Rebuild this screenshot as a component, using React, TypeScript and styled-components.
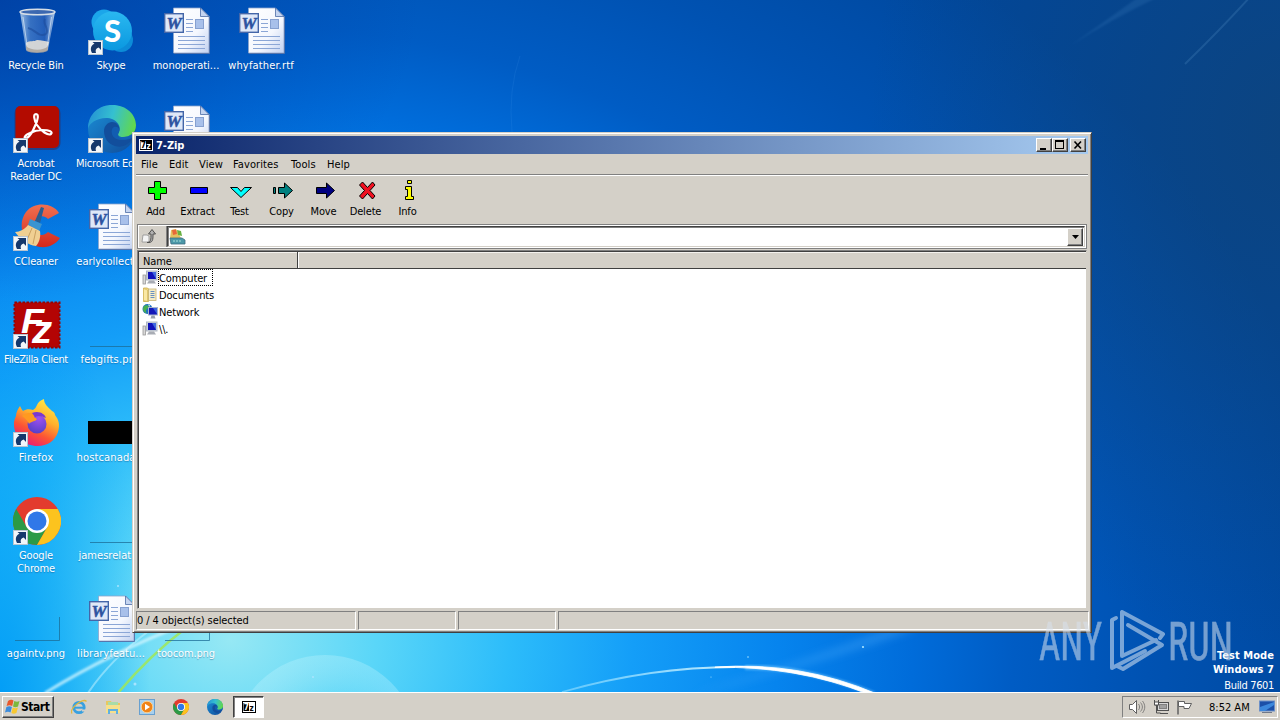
import { ReactNode } from 'react';
import styled, { createGlobalStyle, css } from 'styled-components';

const COLORS = {
  face: '#d4d0c8',
  shadow: '#808080',
  dark: '#404040',
  light: '#ffffff',
};

const GlobalStyle = createGlobalStyle`
  * {
    box-sizing: border-box;
  }

  body {
    margin: 0;
    overflow: hidden;
    color: #000;
    font-family: 'DejaVu Sans Condensed', 'DejaVu Sans', sans-serif;
    font-stretch: condensed;
    font-size: 11px;
    line-height: 13px;
    letter-spacing: -0.15px;
  }

  svg {
    display: block;
    flex: none;
  }
`;

const raised = css`
  background: ${COLORS.face};
  border: 1px solid;
  border-color: ${COLORS.light} ${COLORS.dark} ${COLORS.dark} ${COLORS.light};
  box-shadow: inset -1px -1px 0 ${COLORS.shadow};
`;

const Screen = styled.main`
  position: relative;
  display: flex;
  flex-direction: column;
  width: 1280px;
  height: 720px;
  overflow: hidden;
`;

const Desktop = styled.section`
  position: relative;
  flex: 1;
  overflow: hidden;
  background:
    radial-gradient(ellipse 150px 420px at 0 692px, rgba(0, 156, 246, 0.95), rgba(0, 160, 246, 0.6) 45%, rgba(0, 160, 246, 0) 100%),
    radial-gradient(ellipse 420px 300px at 0 0, rgba(0, 50, 150, 0.55), rgba(0, 60, 170, 0) 100%),
    radial-gradient(ellipse 420px 520px at 1290px 130px, rgba(20, 66, 110, 0.6), rgba(0, 60, 130, 0) 100%),
    radial-gradient(
      ellipse 1120px 880px at 230px 640px,
      #96e8f4 0%,
      #5ad6f8 13%,
      #2cbcfa 25%,
      #149ef8 36%,
      #0684ee 49%,
      #006cda 61%,
      #005cc4 70%,
      #0052b2 82%,
      #00479c 100%
    );
`;

const Wallpaper = styled.svg`
  position: absolute;
  inset: 0;
`;

const IconGrid = styled.div`
  position: relative;
  display: grid;
  grid-template-columns: repeat(4, 75px);
  grid-template-rows: repeat(7, 98px);
  margin-left: -1px;
`;

const Shortcut = styled.div<{ $col: number; $row: number }>`
  grid-column: ${(p) => p.$col};
  grid-row: ${(p) => p.$row};
  display: flex;
  flex-direction: column;
  align-items: center;
  padding-top: 7px;
`;

const ShortcutLabel = styled.span<{ $spacing?: number }>`
  margin: 4px 1px 0 0;
  color: #fff;
  letter-spacing: ${(p) => p.$spacing ?? -0.15}px;
  text-align: center;
  white-space: pre;
  text-shadow: 0 1px 1px rgba(0, 40, 90, 0.35);
`;

const Window = styled.section`
  position: absolute;
  left: 132px;
  top: 132px;
  display: flex;
  flex-direction: column;
  width: 960px;
  height: 501px;
  padding: 2px;
  background: ${COLORS.face};
  border: 1px solid;
  border-color: ${COLORS.face} ${COLORS.dark} ${COLORS.dark} ${COLORS.face};
  box-shadow:
    inset 1px 1px 0 ${COLORS.light},
    inset -1px -1px 0 ${COLORS.shadow};
`;

const TitleBar = styled.header`
  display: flex;
  align-items: center;
  height: 18px;
  margin: 1px;
  margin-bottom: 0;
  padding: 0 2px 0 3px;
  color: #fff;
  font-weight: 700;
  letter-spacing: -0.05px;
  background: linear-gradient(90deg, #0a246a, #a6caf0);
`;

const TitleText = styled.span`
  flex: 1;
  margin-left: 3px;
`;

const CaptionButton = styled.span<{ $gap?: boolean }>`
  ${raised}
  display: flex;
  width: 16px;
  height: 14px;
  margin-left: ${(p) => (p.$gap ? '2px' : 0)};
`;

const MenuBar = styled.nav`
  display: flex;
  height: 20px;
  margin: 0 1px;
  padding: 4px 0 0 5px;
  letter-spacing: 0.1px;
`;

const MenuItem = styled.span<{ $width: number }>`
  width: ${(p) => p.$width}px;
  white-space: nowrap;
`;

const ToolBar = styled.div`
  display: flex;
  height: 50px;
  margin: 0 1px;
  border-top: 1px solid ${COLORS.shadow};
  box-shadow: inset 0 1px 0 ${COLORS.light};
`;

const Tool = styled.div`
  display: flex;
  flex-direction: column;
  align-items: center;
  width: 42px;
  padding-top: 5px;

  span {
    margin: 3px 3px 0 0;
  }
`;

const AddressBar = styled.div`
  display: flex;
  height: 25px;
  margin-left: 2px;
  margin-right: 2px;
  padding: 1px;
  border: 1px solid ${COLORS.shadow};
  box-shadow: inset 0 0 0 1px ${COLORS.light};
`;

const UpButton = styled.div`
  width: 28px;
  padding: 1px 0 0 1px;
  border-right: 1px solid ${COLORS.shadow};
`;

const Combo = styled.div`
  display: flex;
  flex: 1;
  justify-content: space-between;
  padding: 0;
  background: #fff;
  border: 1px solid;
  border-color: ${COLORS.dark} ${COLORS.face} ${COLORS.face} ${COLORS.dark};
  box-shadow: inset 1px 1px 0 ${COLORS.shadow};
`;

const ComboArrow = styled.span`
  ${raised}
  display: flex;
  align-items: center;
  justify-content: center;
  width: 16px;
  height: 18px;
  margin: 1px 1px 0 0;
`;

const FileList = styled.div`
  flex: 1;
  margin: 1px 2px 0;
  background: #fff;
  border: 1px solid;
  border-color: ${COLORS.shadow} ${COLORS.face} ${COLORS.face} ${COLORS.shadow};
  box-shadow: inset 1px 1px 0 ${COLORS.dark};
  padding: 1px 0 0 1px;
`;

const ListHeader = styled.div`
  display: flex;
  height: 17px;
  background: ${COLORS.face};
  border-bottom: 1px solid ${COLORS.dark};
  box-shadow: inset 0 1px 0 #f4f2ee;
`;

const HeaderCell = styled.span`
  width: 159px;
  padding: 3px 0 0 4px;
  border-right: 1px solid ${COLORS.dark};
  box-shadow: 1px 0 0 ${COLORS.light};
`;

const FileRow = styled.div`
  display: flex;
  align-items: center;
  height: 17px;
  padding-left: 3px;
`;

const FileName = styled.span<{ $focused?: boolean }>`
  height: 17px;
  padding: 2px ${(p) => (p.$focused ? 5 : 2)}px 0 0;
  border: 1px dotted ${(p) => (p.$focused ? '#000' : 'transparent')};
  line-height: 13px;
`;

const StatusBar = styled.footer`
  display: flex;
  gap: 2px;
  height: 19px;
  margin: 2px 0 0 1px;
`;

const StatusPane = styled.span<{ $width?: number }>`
  ${(p) => (p.$width ? `width: ${p.$width}px` : 'flex: 1')};
  padding: 2px 0 0 0;
  border: 1px solid;
  border-color: ${COLORS.shadow} ${COLORS.light} ${COLORS.light} ${COLORS.shadow};
  letter-spacing: -0.08px;
`;

const BuildInfo = styled.div`
  position: absolute;
  right: 6px;
  bottom: -1px;
  color: #fff;
  text-align: right;
  line-height: 14px;
  letter-spacing: -0.35px;

  b {
    display: block;
    letter-spacing: 0.05px;
  }

  span {
    display: block;
    margin-top: 2px;
  }
`;

const Watermark = styled.svg`
  position: absolute;
  left: 1030px;
  top: 604px;
`;

const TaskBar = styled.footer`
  display: flex;
  align-items: flex-start;
  height: 28px;
  padding: 4px 2px 0;
  background: ${COLORS.face};
  box-shadow: inset 0 1px 0 ${COLORS.light};
`;

const StartButton = styled.div`
  ${raised}
  display: flex;
  align-items: center;
  width: 52px;
  height: 22px;
  padding-left: 1px;
  font-size: 12px;
  font-weight: 700;
  letter-spacing: -0.45px;
`;

const QuickLaunch = styled.div`
  display: flex;
  gap: 18px;
  margin: 3px 0 0 17px;
`;

const ActiveTask = styled.div`
  display: flex;
  align-items: center;
  justify-content: center;
  width: 31px;
  height: 22px;
  margin-left: 10px;
  background: #fff;
  border: 1px solid;
  border-color: ${COLORS.dark} ${COLORS.light} ${COLORS.light} ${COLORS.dark};
  box-shadow: inset 1px 1px 0 ${COLORS.shadow};
`;

const Tray = styled.div`
  display: flex;
  align-items: center;
  width: 156px;
  height: 22px;
  margin-left: auto;
  padding-left: 5px;
  border: 1px solid;
  border-color: ${COLORS.shadow} ${COLORS.light} ${COLORS.light} ${COLORS.shadow};
`;

const Clock = styled.span`
  width: 50px;
  margin-left: 14px;
  letter-spacing: 0;
  white-space: nowrap;
`;

const ShortcutArrow = () => (
  <g>
    <rect x="0.5" y="33.5" width="14" height="14" fill="#f2f6fa" stroke="#b8c4d0" />
    <path
      d="M4 46c-2.500-4.500-.5-8 2.500-9.200L4.500 35h8.500v8l-2.300-2.500C8 41.500 7 43 8 46z"
      fill="#16386c"
    />
  </g>
);

const IconFrame = ({ children, link }: { children: ReactNode; link?: boolean }) => (
  <svg width="48" height="48" viewBox="0 0 48 48">
    {children}
    {link && <ShortcutArrow />}
  </svg>
);

const RecycleBin = () => (
  <IconFrame>
    <defs>
      <linearGradient id="glass">
        <stop offset="0" stopColor="#c3dcf2" stopOpacity=".85" />
        <stop offset=".3" stopColor="#5a8cd0" stopOpacity=".6" />
        <stop offset=".7" stopColor="#3a6cc0" stopOpacity=".6" />
        <stop offset="1" stopColor="#d4e6f6" stopOpacity=".85" />
      </linearGradient>
    </defs>
    <g transform="translate(0 1)">
      <path d="M7 4l6 38c3 3.500 19 3.500 22 0l7-38z" fill="url(#glass)" />
      <path d="M13 35c4-3 8-1 11-3 4 0 8 1 12 2l-1.500 8c-4 3-17 3-21 0z" fill="#e4e0d8" opacity=".9" />
      <path d="M13 38c5 5 18 5 22 0l-.5 5c-4 2.500-17 2.500-21 0z" fill="#a8a098" opacity=".8" />
      <path d="M15 20c7 1 10 10 18 6M32 11c-3 5 5 10 1 15" stroke="#2050a0" strokeWidth="2" fill="none" opacity=".7" />
      <ellipse cx="24.500" cy="4" rx="17.500" ry="2.800" fill="#3c68b0" stroke="#d6dee6" strokeWidth="1.500" />
      <path d="M10 9l4 28M38.500 9l-4 28" stroke="#e6f2fc" opacity=".6" fill="none" />
    </g>
  </IconFrame>
);

const Skype = () => (
  <IconFrame link>
    <defs>
      <linearGradient id="sky" x1="0" y1="0" x2="0" y2="1">
        <stop stopColor="#2ab8f0" />
        <stop offset="1" stopColor="#0a98e0" />
      </linearGradient>
    </defs>
    <circle cx="16" cy="15" r="12.500" fill="#1ba6ea" />
    <circle cx="33" cy="33" r="12" fill="#0c8cd8" />
    <circle cx="24.500" cy="24" r="19.500" fill="url(#sky)" />
    <text x="24.500" y="34.500" textAnchor="middle" fontFamily="Lato, sans-serif" fontWeight="900" fontSize="31" fill="#fff">
      S
    </text>
  </IconFrame>
);

const WordDoc = () => (
  <IconFrame>
    <defs>
      <linearGradient id="sheet" x1="0" y1="0" x2="1" y2="1">
        <stop stopColor="#fff" />
        <stop offset=".6" stopColor="#f4f7fe" />
        <stop offset="1" stopColor="#c0d0f0" />
      </linearGradient>
    </defs>
    <path d="M10.500 1h27l8.500 8.500V46H10.500z" fill="url(#sheet)" stroke="#8ea4cc" strokeWidth=".8" />
    <path d="M11 46.500h35.500V10" stroke="#5876ac" fill="none" />
    <path d="M37.500 1v8.500H46z" fill="#c4d4f0" stroke="#4c6ca4" strokeWidth=".8" />
    <path
      d="M23 12.500h7M23 16.500h7M23 20.500h7M23 24.500h7M15 29.500h27M15 33.500h27M15 37.500h27M15 41.500h27"
      stroke="#8ba6d6"
    />
    <rect x="32.500" y="12.500" width="8" height="9" fill="#a8c0ea" stroke="#86a0d0" />
    <rect x="1.700" y="6.700" width="18.600" height="18.600" fill="#dfe8f8" stroke="#4466a8" strokeWidth="1.400" />
    <text
      x="11"
      y="22"
      textAnchor="middle"
      fontFamily="Liberation Serif, serif"
      fontStyle="italic"
      fontWeight="700"
      fontSize="17"
      fill="#2d53a0"
      stroke="#2d53a0"
      strokeWidth=".5"
    >
      W
    </text>
  </IconFrame>
);

const Acrobat = () => (
  <IconFrame link>
    <rect x="1.500" y="1" width="46" height="44" rx="7" fill="#501428" opacity=".4" />
    <rect x="2.500" y="1" width="43.500" height="42" rx="5" fill="#b30b00" />
    <path
      d="M14 33c-4 2-3-3 3-5 4-2 8-3 12-3 8 0 11 2 9 4-3 2-10-3-14-9-3-5-4-11-1-11s2 6-1 12c-2 5-5 10-8 12z"
      fill="none"
      stroke="#fff"
      strokeWidth="2.200"
    />
  </IconFrame>
);

const EdgeShape = () => (
  <>
    <defs>
      <linearGradient id="edgeTop" x1="0" y1=".3" x2="1" y2=".5">
        <stop stopColor="#2492d4" />
        <stop offset=".5" stopColor="#35c0d0" />
        <stop offset="1" stopColor="#62d84c" />
      </linearGradient>
      <linearGradient id="edgeLow" x1="0" y1="0" x2="1" y2="1">
        <stop stopColor="#1b90d8" />
        <stop offset="1" stopColor="#104a98" />
      </linearGradient>
    </defs>
    <circle cx="24" cy="24" r="24" fill="url(#edgeLow)" />
    <path
      d="M0 24C0 8 12 0 24 0c15 0 24 10 24 20 0 9-7 12-13 12-5 0-6-2-4-5 3-6-3-14-13-14C9 13 1 18 0 24z"
      fill="url(#edgeTop)"
    />
    <path d="M16 26c0-5 4-9 8-9 5 0 9 5 7 10-2 3-1 6 4 7 4 1 8-1 11-3-5 10-13 12-19 10-7-2-11-8-11-15z" fill="#124e9c" />
    <path d="M26 22c6-1 6 4 4 7 0 4 8 4 12 1l6-4v4l-4 3c-8 4-19 2-20-4-1-3 0-6 2-7z" fill="#1268c0" opacity=".6" />
  </>
);

const CCleaner = () => (
  <IconFrame link>
    <defs>
      <linearGradient id="cc" x1="0" y1="0" x2="0" y2="1">
        <stop stopColor="#f07050" />
        <stop offset="1" stopColor="#d4281c" />
      </linearGradient>
    </defs>
    <path d="M46 10C40 0 22-2 13 9c-9 12-4 32 14 35 9 1 16-3 20-9l-12-6c-6 6-14 2-14-6s8-13 14-7z" fill="url(#cc)" />
    <path d="M28 4l3 1-4 15-5-2z" fill="#2a5e90" />
    <path d="M17 16l12 5-3 7-11-6z" fill="#3a94d0" />
    <path d="M15 22l12 6c1 6-1 12-4 15-8-1-16-7-21-14 5 0 10-3 13-7z" fill="#f0cf92" />
    <path d="M19 25l-5 12M23 27l-3 14" stroke="#caa060" fill="none" />
  </IconFrame>
);

const FileZilla = () => (
  <IconFrame link>
    <rect x="1.500" y="1.500" width="45" height="45" fill="#b00404" stroke="#980000" strokeWidth="2" strokeDasharray="2.500 1.500" />
    <rect x="2.500" y="2.500" width="43" height="43" fill="#b40404" />
    <g fontFamily="Liberation Sans, sans-serif" fontStyle="italic" fontWeight="700" fill="#fff">
      <text x="8" y="32" fontSize="35" textLength="23" lengthAdjust="spacingAndGlyphs">
        F
      </text>
      <text x="19" y="41.500" fontSize="39" textLength="20" lengthAdjust="spacingAndGlyphs">
        z
      </text>
    </g>
  </IconFrame>
);

const Firefox = () => (
  <IconFrame link>
    <defs>
      <linearGradient id="fox" x1=".8" y1="0" x2=".3" y2="1">
        <stop stopColor="#fff04a" />
        <stop offset=".4" stopColor="#ffb02c" />
        <stop offset=".7" stopColor="#fc5434" />
        <stop offset="1" stopColor="#e81878" />
      </linearGradient>
      <radialGradient id="orb" cx=".6" cy=".2" r=".8">
        <stop stopColor="#a050f0" />
        <stop offset="1" stopColor="#5540c8" />
      </radialGradient>
    </defs>
    <path
      d="M7 7c1 2 2 4 3 5 3-2 7-2 10-1 2-1 3-3 4-5 1-3 4-5 7-6 0 5 4 8 8 12 2 1 3 2 3 4 4 5 5 10 3 17-3 9-11 14-20 14C11 47 2 38 1 27c-.5-5 1-8 2-10 0-4 2-7 4-10z"
      fill="url(#fox)"
    />
    <circle cx="24" cy="25" r="9.500" fill="url(#orb)" />
    <path d="M9 17c4-4 11-4 14-2l-2 3 3 2c-2 3-6 2-8 5-1-3-4-6-7-8z" fill="#ff9a20" />
    <path d="M19 14c7-3 13 1 14 5-4-2-8-3-11-1z" fill="#7a38d0" />
  </IconFrame>
);

const ChromeShape = () => (
  <>
    <circle cx="24" cy="24" r="24" fill="#e33b2e" />
    <path d="M3.200 12A24 24 0 0024 48l10.400-18L24 36 13.600 30z" fill="#2b9a46" />
    <path d="M24 48A24 24 0 0044.800 12H24l10.400 18z" fill="#fcc31e" />
    <circle cx="24" cy="24" r="12" fill="#fff" />
    <circle cx="24" cy="24" r="9.500" fill="#3078e8" />
  </>
);

// Thumbnails of blank pictures only leave the drop shadow on the wallpaper
const BlankThumb = ({ side = 24 }: { side?: number }) => (
  <IconFrame>
    <path d={`M2 45.500h44.500V${46 - side}`} stroke="#1c6c96" strokeOpacity=".75" fill="none" />
  </IconFrame>
);

const BlackThumb = () => (
  <IconFrame>
    <rect x="0" y="22" width="48" height="23" fill="#000" />
  </IconFrame>
);

interface IShortcut {
  col: number;
  row: number;
  label: string;
  icon: ReactNode;
  spacing?: number;
}

const SHORTCUTS: IShortcut[] = [
  { col: 1, row: 1, label: 'Recycle Bin', icon: <RecycleBin /> },
  { col: 1, row: 2, label: 'Acrobat\nReader DC', icon: <Acrobat /> },
  { col: 1, row: 3, label: 'CCleaner', icon: <CCleaner /> },
  { col: 1, row: 4, label: 'FileZilla Client', icon: <FileZilla />, spacing: -0.35 },
  { col: 1, row: 5, label: 'Firefox', icon: <Firefox />, spacing: 0.3 },
  { col: 1, row: 6, label: 'Google\nChrome', icon: <IconFrame link><ChromeShape /></IconFrame> },
  { col: 1, row: 7, label: 'againtv.png', icon: <BlankThumb />, spacing: 0 },
  { col: 2, row: 1, label: 'Skype', icon: <Skype /> },
  { col: 2, row: 2, label: 'Microsoft Edge', icon: <IconFrame link><EdgeShape /></IconFrame>, spacing: -0.2 },
  { col: 2, row: 3, label: 'earlycollecti...', icon: <WordDoc />, spacing: 0 },
  { col: 2, row: 4, label: 'febgifts.png', icon: <BlankThumb side={10} />, spacing: 0.15 },
  { col: 2, row: 5, label: 'hostcanada...', icon: <BlackThumb />, spacing: 0.15 },
  { col: 2, row: 6, label: 'jamesrelati...', icon: <BlankThumb side={10} />, spacing: 0.05 },
  { col: 2, row: 7, label: 'libraryfeatu...', icon: <WordDoc />, spacing: 0.05 },
  { col: 3, row: 1, label: 'monoperati...', icon: <WordDoc />, spacing: 0 },
  { col: 3, row: 2, label: '', icon: <WordDoc /> },
  { col: 3, row: 7, label: 'toocom.png', icon: <BlankThumb side={14} />, spacing: -0.15 },
  { col: 4, row: 1, label: 'whyfather.rtf', icon: <WordDoc />, spacing: 0.15 },
];

const MENU = [
  { text: 'File', width: 28 },
  { text: 'Edit', width: 30 },
  { text: 'View', width: 34 },
  { text: 'Favorites', width: 58 },
  { text: 'Tools', width: 36 },
  { text: 'Help', width: 30 },
];

const TOOLS = [
  { text: 'Add', art: <path d="M9.500 1.500h6v6h6v6h-6v6h-6v-6h-6v-6h6z" fill="#0f0" /> },
  { text: 'Extract', art: <path d="M3.500 7.500h17v6h-17z" fill="#00f" /> },
  { text: 'Test', art: <path d="M1.500 7.500h7l3.500 4 3.500-4h7L12 17.500z" fill="#0ff" /> },
  { text: 'Copy', art: <path d="M2.500 7.500h2v6h-2zM7.500 7.500h6V3l8 7.500-8 7.500v-4.500h-6z" fill="#008080" /> },
  { text: 'Move', art: <path d="M3.500 7.500h10V3l8 7.500-8 7.500v-4.500h-10z" fill="#000080" /> },
  {
    text: 'Delete',
    art: <path d="M4.500 5l3-3 5 5.500L17.500 2l2.500 3-5 5.500 5 5.500-2.500 3-5-5.500L7.500 19l-3-3 5-5.500z" fill="#f01020" />,
  },
  { text: 'Info', art: <path d="M10.500.5h4v3h-4zM8.500 6.500h6v10h2v3h-8v-3h2v-7h-2z" fill="#ff0" /> },
];

const SevenZipMark = ({ inverse, width = 14 }: { inverse?: boolean; width?: number }) => (
  <svg width={width} height="12" viewBox="0 0 14 12">
    <rect x=".5" y=".5" width="13" height="11" fill={inverse ? '#fff' : '#000'} stroke={inverse ? '#000' : '#fff'} />
    <rect x="1.500" y="2" width="5.500" height="8" fill={inverse ? '#000' : '#fff'} />
    <text x="1.800" y="9.300" fontFamily="DejaVu Sans" fontWeight="700" fontSize="8.500" fill={inverse ? '#fff' : '#000'}>
      7
    </text>
    <text x="7.500" y="9.500" fontFamily="DejaVu Sans" fontWeight="700" fontSize="8" fill={inverse ? '#000' : '#fff'}>
      z
    </text>
  </svg>
);

const ComputerGlyph = () => (
  <svg width="16" height="16" viewBox="0 0 16 16">
    <rect x="1" y="5" width="2.500" height="9" fill="#d8d8d8" stroke="#999" strokeWidth=".8" />
    <rect x="4.500" y="1" width="10.500" height="9" fill="#c8d0dc" stroke="#b0b8c4" />
    <rect x="6" y="2" width="8" height="7" fill="#1010b8" />
    <path d="M10 2h4v7z" fill="#4068e0" />
    <path d="M7 10.500h5l2 3H5z" fill="#a8acb4" />
  </svg>
);

const DocumentsGlyph = () => (
  <svg width="16" height="16" viewBox="0 0 16 16">
    <path d="M1.500 1h4l1 1v12.500h-5z" fill="#f6dc84" stroke="#c8a848" strokeWidth=".8" />
    <rect x="6.500" y="2" width="7.500" height="11.500" fill="#f4ecc8" stroke="#c8b474" strokeWidth=".8" />
    <path d="M8.500 4.500h4M8.500 6.500h4M8.500 8.500h4M8.500 10.500h4" stroke="#6890c0" />
    <path d="M1.500 1.500l4 1.500v11.500l-4-1z" fill="#fae8a4" stroke="#d0b458" strokeWidth=".6" />
  </svg>
);

const NetworkGlyph = () => (
  <svg width="16" height="16" viewBox="0 0 16 16">
    <circle cx="5.500" cy="5" r="5" fill="#2070c0" />
    <path d="M2 2c3-2 6 0 4 2S3 7 5 9.500C1 8.500 0 5 2 2z" fill="#48b050" />
    <path d="M6 .5c2 0 3 2 1 2z" fill="#d4f0d8" />
    <rect x="6.500" y="3.500" width="9" height="7.500" fill="#1418b8" stroke="#a8b4cc" />
    <path d="M11 4h4v6z" fill="#3c64e0" />
    <path d="M9.500 11.500h3l1 3h-5z" fill="#98a0ac" />
  </svg>
);

const FILES = [
  { name: 'Computer', glyph: <ComputerGlyph />, focused: true },
  { name: 'Documents', glyph: <DocumentsGlyph /> },
  { name: 'Network', glyph: <NetworkGlyph /> },
  { name: '\\\\.', glyph: <ComputerGlyph /> },
];

const FlagShape = () => (
  <g>
    <path d="M4 2c2-1.500 4-1.500 5.500-.5L8.200 7C6.500 6 4.500 6 2.600 7z" fill="#e8582c" />
    <path d="M10.300 2c2 1 3.500 1 5.200 0L14 7.500c-2 1-3.500.800-5 0z" fill="#7cb83c" />
    <path d="M2.400 8c2-1 4-1 5.500 0L6.500 13.500c-1.500-1-3.500-1-5.500 0z" fill="#3c8cdc" />
    <path d="M8.700 8.500c2 1 3.500.800 5.200 0l-1.500 5.500c-2 1-3.500.800-5 0z" fill="#f8c830" />
  </g>
);

const App = () => (
  <Screen>
    <GlobalStyle />
    <Desktop>
      <Wallpaper width="1280" height="692">
        <defs>
          <linearGradient id="arc" x1="560" x2="740" y1="0" y2="0" gradientUnits="userSpaceOnUse">
            <stop stopColor="#8edcff" stopOpacity=".6" />
            <stop offset="1" stopColor="#c8f0ff" />
          </linearGradient>
          <radialGradient id="bubble">
            <stop offset=".5" stopColor="#fff" stopOpacity="0" />
            <stop offset="1" stopColor="#c8f6ff" stopOpacity=".3" />
          </radialGradient>
          <filter id="soft">
            <feGaussianBlur stdDeviation="1.200" />
          </filter>
          <filter id="haze" x="-20%" y="-50%" width="140%" height="200%">
            <feGaussianBlur stdDeviation="4" />
          </filter>
        </defs>
        <circle cx="325" cy="748" r="93" fill="url(#bubble)" />
        <path d="M690 694Q800 670 920 628l-30 0Q810 660 690 694z" fill="#58b4ff" opacity=".35" filter="url(#haze)" />
        <path d="M562 692Q650 667 735 667" stroke="url(#arc)" strokeWidth="1.800" fill="none" />
        <path d="M745 667.500Q805 666 874 694" stroke="#7cccff" strokeWidth="5" fill="none" opacity=".6" filter="url(#soft)" />
        <path d="M715 667Q800 661 877 694L868 694Q796 665.500 715 667.500z" fill="#fff" stroke="#fff" strokeWidth=".8" />
        <path d="M45 693Q110 653 190 622" stroke="#d8f8ff" strokeWidth="3" fill="none" opacity=".75" filter="url(#soft)" />
        <path d="M88 693Q110 660 150 630" stroke="#c8f4ff" strokeWidth="2" fill="none" opacity=".5" />
        <path d="M118 693Q150 655 186 628" stroke="#a4e84c" strokeWidth="2.500" fill="none" opacity=".8" />
        <path d="M1185 64Q1220 30 1250-3" stroke="#6aa4d8" strokeWidth="2" fill="none" opacity=".2" />
        <path d="M1070 46Q1110 20 1160-4l-20 0z" fill="#5c9cd8" opacity=".15" filter="url(#soft)" />
        <path d="M512 132Q508 90 520 56" stroke="#4c9ce8" fill="none" opacity=".15" />
        <g fill="#a8e4ff">
          <circle cx="748" cy="657" r=".8" />
          <circle cx="863" cy="647" r="1.100" />
          <circle cx="135" cy="684" r="1.500" />
          <circle cx="118" cy="586" r="1" />
          <circle cx="313" cy="677" r="1" />
          <circle cx="711" cy="677" r=".6" />
        </g>
      </Wallpaper>

      <IconGrid>
        {SHORTCUTS.map((item) => (
          <Shortcut key={`${item.col}-${item.row}`} $col={item.col} $row={item.row}>
            {item.icon}
            <ShortcutLabel $spacing={item.spacing}>{item.label}</ShortcutLabel>
          </Shortcut>
        ))}
      </IconGrid>

      <BuildInfo>
        <b>Test Mode</b>
        <b>Windows 7</b>
        <span>Build 7601</span>
      </BuildInfo>

      <Window>
        <TitleBar>
          <SevenZipMark />
          <TitleText>7-Zip</TitleText>
          <CaptionButton>
            <svg width="14" height="12">
              <path d="M3 9h6v2H3z" />
            </svg>
          </CaptionButton>
          <CaptionButton>
            <svg width="14" height="12" shapeRendering="crispEdges">
              <path d="M2 1h9v9H2zM3 3v6h7V3z" fillRule="evenodd" />
            </svg>
          </CaptionButton>
          <CaptionButton $gap>
            <svg width="14" height="12">
              <path d="M3.500 2.500l6.500 7M10 2.500l-6.500 7" stroke="#000" strokeWidth="1.600" />
            </svg>
          </CaptionButton>
        </TitleBar>

        <MenuBar>
          {MENU.map((item) => (
            <MenuItem key={item.text} $width={item.width}>
              {item.text}
            </MenuItem>
          ))}
        </MenuBar>

        <ToolBar>
          {TOOLS.map((tool) => (
            <Tool key={tool.text}>
              <svg width="24" height="22" stroke="#000" strokeWidth="1">
                {tool.art}
              </svg>
              <span>{tool.text}</span>
            </Tool>
          ))}
        </ToolBar>

        <AddressBar>
          <UpButton>
            <svg width="18" height="18" viewBox="0 0 18 18">
              <path d="M3 8h4l2 1v6H2z" fill="#f4f4f4" stroke="#909090" strokeWidth=".8" />
              <path d="M7 15.500c4 0 4-3 4-8.500H8.500L12 2.500 15.500 7H13c0 6 0 9-6 8.500z" fill="#b0b0b0" stroke="#505050" />
            </svg>
          </UpButton>
          <Combo>
            <svg width="18" height="19" viewBox="0 0 18 19">
              <path d="M3 3l5-1 5 9H2z" fill="#e4c060" />
              <path d="M4 3l4-.5L9 7 5 8z" fill="#e86838" />
              <path d="M9 3l4 1 1 5-4-1z" fill="#68b040" />
              <path d="M2 11h12l3 2v4H3z" fill="#4c98a8" stroke="#3c6c80" strokeWidth=".8" />
              <path d="M5 14h9" stroke="#a8e0d8" strokeDasharray="2 1" />
            </svg>
            <ComboArrow>
              <svg width="7" height="4">
                <path d="M0 0h7L3.500 4z" />
              </svg>
            </ComboArrow>
          </Combo>
        </AddressBar>

        <FileList>
          <ListHeader>
            <HeaderCell>Name</HeaderCell>
          </ListHeader>
          {FILES.map((file) => (
            <FileRow key={file.name}>
              {file.glyph}
              <FileName $focused={file.focused}>{file.name}</FileName>
            </FileRow>
          ))}
        </FileList>

        <StatusBar>
          <StatusPane $width={220}>0 / 4 object(s) selected</StatusPane>
          <StatusPane $width={98} />
          <StatusPane $width={98} />
          <StatusPane />
        </StatusBar>
      </Window>

      <Watermark width="210" height="80" opacity=".55">
        <g fill="#d8e2ee" stroke="#d8e2ee" strokeWidth=".5" fontFamily="Roboto, sans-serif" fontSize="53" letterSpacing="0">
          <text x="9" y="56" textLength="63" lengthAdjust="spacingAndGlyphs">
            ANY
          </text>
          <text x="138" y="56" textLength="65" lengthAdjust="spacingAndGlyphs">
            RUN
          </text>
        </g>
        <g fill="none" stroke="#dce8f4" strokeWidth="4" strokeLinejoin="round" strokeLinecap="round">
          <path d="M86 14l-4 2v48l33-17" />
          <path d="M130 34l3-4L92 8v44l34-16" />
          <path d="M98 21l34 20-39 24-6-3" />
        </g>
      </Watermark>
    </Desktop>

    <TaskBar>
      <StartButton>
        <svg width="17" height="16" viewBox="0 0 17 16">
          <FlagShape />
        </svg>
        Start
      </StartButton>
      <QuickLaunch>
        <svg width="16" height="16" viewBox="0 0 16 16">
          <circle cx="8" cy="8.500" r="5.200" fill="none" stroke="#38a0e0" strokeWidth="2.800" />
          <path d="M4 8.700h9.500" stroke="#38a0e0" strokeWidth="2" />
          <path d="M11 10.500h5v2h-5z" fill="#d4d0c8" />
          <path d="M1 14.500C-2 10 12-2 15.500 2.500" fill="none" stroke="#e0b840" strokeWidth="1.300" />
        </svg>
        <svg width="16" height="16" viewBox="0 0 16 16">
          <path d="M1 2h5l1 2h8v10H1z" fill="#e8c860" />
          <path d="M3 3h10v5H3z" fill="#a8dca8" />
          <path d="M1 6h14v8H1z" fill="#f6e08c" />
          <path d="M4 15v-4h8v4" fill="none" stroke="#60b0e0" strokeWidth="2" />
        </svg>
        <svg width="16" height="16" viewBox="0 0 16 16">
          <rect x=".5" y=".5" width="15" height="15" fill="#a8d0ee" stroke="#68a0d0" />
          <circle cx="8" cy="8" r="5.800" fill="#f08418" stroke="#fbd090" />
          <path d="M6 4.800l5 3.200-5 3.200z" fill="#fff" />
        </svg>
        <svg width="16" height="16" viewBox="0 0 48 48">
          <ChromeShape />
        </svg>
        <svg width="16" height="16" viewBox="0 0 48 48">
          <EdgeShape />
        </svg>
      </QuickLaunch>
      <ActiveTask>
        <SevenZipMark inverse width={16} />
      </ActiveTask>
      <Tray>
        <svg width="18" height="16" viewBox="0 0 18 16" fill="none" stroke="#606060">
          <path d="M1.500 5.500h3l4-4v13l-4-4h-3z" fill="#fff" />
          <path d="M10.500 5c1.500 2 1.500 4 0 6M12.500 3.500c2.500 3 2.500 6 0 9M14.500 2c3 4 3 8 0 12" opacity=".7" />
        </svg>
        <svg width="25" height="16" viewBox="-7 0 25 16" fill="none" stroke="#505050">
          <rect x="4.500" y="3.500" width="11" height="8" fill="#d8d8d8" />
          <rect x="6.500" y="5.500" width="7" height="4" fill="#a0a0a0" stroke="#808080" />
          <path d="M7 14.500h8M1.500 1v5h4V1M3.500 6v8h4" />
          <path d="M1.500 3h4v3h-4z" fill="#fff" />
        </svg>
        <svg width="24" height="16" viewBox="-5 0 24 16" fill="#fff" stroke="#606060">
          <path d="M2 1.500v14" strokeWidth="1.500" />
          <path d="M2.500 2.500h6v2h7l-2.500 5H8v-2H2.500z" />
        </svg>
        <Clock>8:52 AM</Clock>
        <svg width="16" height="14" viewBox="0 0 16 14">
          <rect x=".5" y="1" width="15" height="10" fill="#1c50a8" stroke="#6c90c8" />
          <path d="M1 7l14-5v3L6 11H1z" fill="#3c88dc" />
          <path d="M3 12.500h10" stroke="#707888" />
        </svg>
      </Tray>
    </TaskBar>
  </Screen>
);

export default App;
